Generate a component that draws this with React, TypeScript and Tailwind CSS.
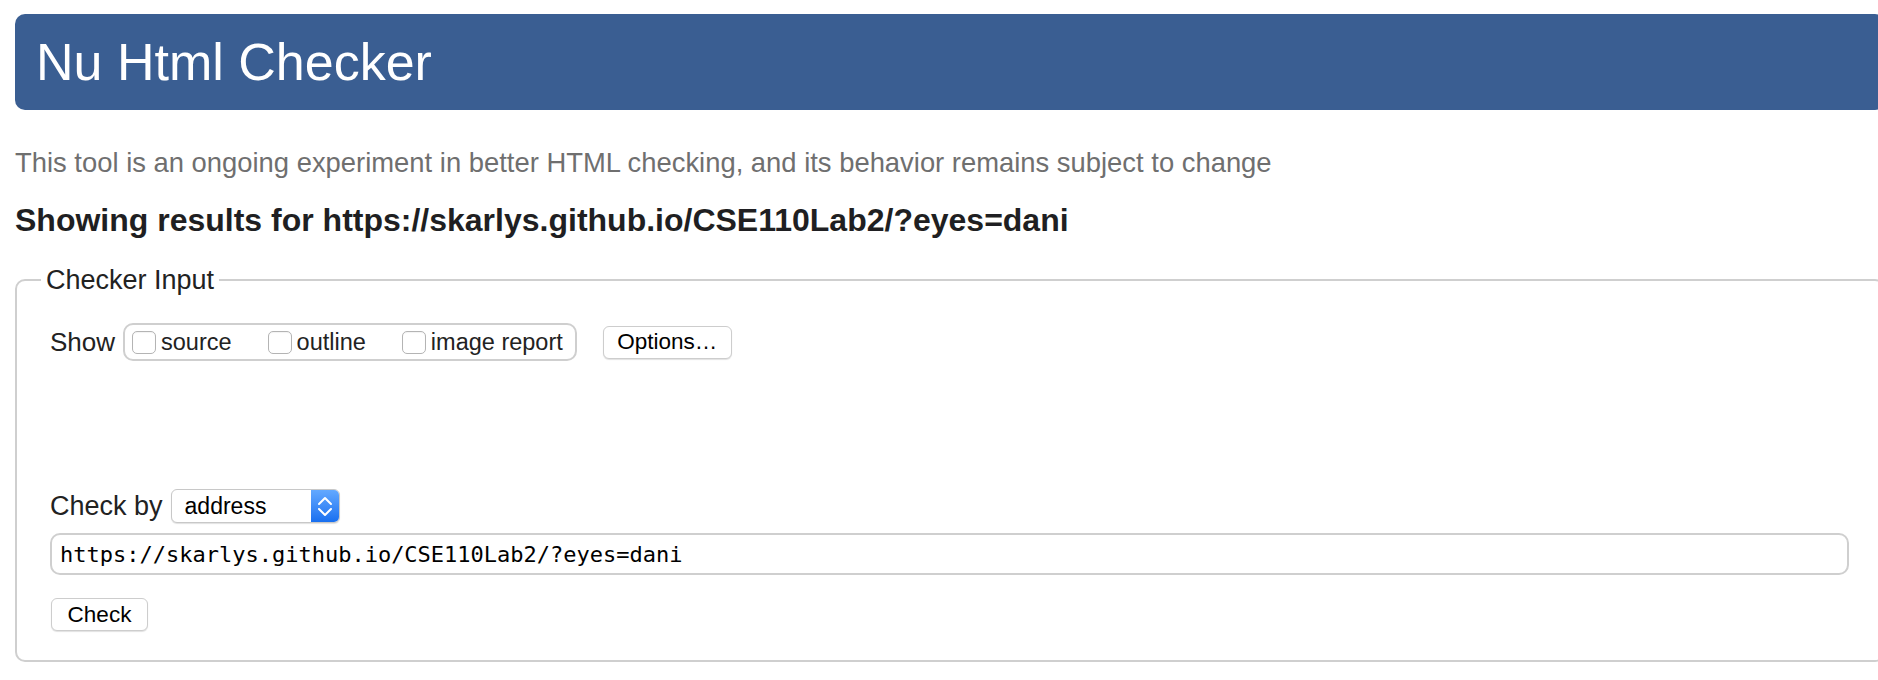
import React from "react";

function Box() {
  return (
    <span className="inline-block w-[24px] h-[23px] shrink-0 rounded-[5px] border border-[#b4b4b4] bg-white shadow-[inset_0_1px_1px_rgba(0,0,0,0.05)]" />
  );
}

export default function App() {
  return (
    <div className="w-[1878px] h-[680px] overflow-hidden bg-white text-[#222] font-['Liberation_Sans',Arial,sans-serif]">
      <div className="w-[1900px] px-[15px] pt-[14px]">
        <header className="h-[96px] rounded-[10px] bg-[#3a5e92] pl-[21px] flex items-center">
          <h1 className="text-[52px] leading-[52px] text-white font-normal">Nu Html Checker</h1>
        </header>
        <p className="mt-[37px] text-[27.4px] leading-[32px] text-[#6f6f6f]">
          This tool is an ongoing experiment in better HTML checking, and its behavior remains subject to change
        </p>
        <h2 className="mt-[23px] text-[32px] leading-[36px] font-bold text-[#1f1f22]">
          Showing results for https://skarlys.github.io/CSE110Lab2/?eyes=dani
        </h2>
        <fieldset className="mt-[27px] border-2 border-[#cfcfcf] rounded-[10px] pl-[24px] pr-[34px] pb-[29px]">
          <legend className="px-[5px] text-[27px] leading-[30px]">Checker Input</legend>
          <div className="ml-[9px]">
            <div className="mt-[28px] flex items-center">
              <span className="text-[26px] leading-[30px]">Show</span>
              <div className="ml-[8px] h-[38px] flex items-center border-2 border-[#cfcfcf] rounded-[10px] pl-[7px] pr-[12px] gap-[36px] text-[23.5px] leading-[28px]">
                <label className="flex items-center gap-[5px]">
                  <Box />
                  source
                </label>
                <label className="flex items-center gap-[5px]">
                  <Box />
                  outline
                </label>
                <label className="flex items-center gap-[5px]">
                  <Box />
                  image report
                </label>
              </div>
              <button className="ml-[26px] h-[33px] w-[129px] rounded-[6px] border border-[#cdcdcd] bg-white text-black text-[22.5px] leading-[28px] shadow-[0_1px_1px_rgba(0,0,0,0.12)]">
                Options…
              </button>
            </div>
            <div className="mt-[128px] flex items-center">
              <span className="text-[27px] leading-[30px]">Check by</span>
              <div className="ml-[8px] w-[169px] h-[34px] flex rounded-[6px] border border-[#c8c8c8] bg-white shadow-[0_1px_1px_rgba(0,0,0,0.12)] overflow-hidden">
                <span className="flex-1 pl-[13px] text-[23px] leading-[32px] text-black">address</span>
                <span className="w-[28px] bg-linear-to-b from-[#63a9ff] to-[#176ff0] flex items-center justify-center">
                  <svg width="28" height="32" viewBox="0 0 28 32" fill="none" stroke="white" strokeWidth="2" strokeLinecap="round" strokeLinejoin="round">
                    <path d="M8 14 L14 8 L20 14" />
                    <path d="M8 19 L14 25 L20 19" />
                  </svg>
                </span>
              </div>
            </div>
            <input
              readOnly
              defaultValue="https://skarlys.github.io/CSE110Lab2/?eyes=dani"
              className="mt-[10px] block w-full h-[42px] border-2 border-[#cfcfcf] rounded-[10px] px-[8px] text-[22px] text-black font-['DejaVu_Sans_Mono',monospace] outline-none"
            />
            <button className="mt-[23px] ml-[1px] block h-[33px] w-[97px] rounded-[6px] border border-[#cdcdcd] bg-white text-black text-[22.5px] leading-[28px] shadow-[0_1px_1px_rgba(0,0,0,0.12)]">
              Check
            </button>
          </div>
        </fieldset>
      </div>
    </div>
  );
}
